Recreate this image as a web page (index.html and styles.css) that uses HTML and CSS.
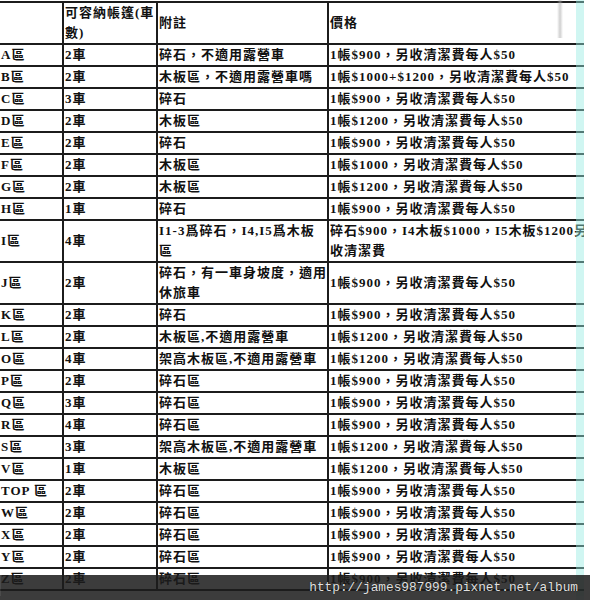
FILE: index.html
```html
<!DOCTYPE html>
<html lang="zh-Hant">
<head>
<meta charset="utf-8">
<title>營區表</title>
<link rel="stylesheet" href="styles.css">
</head>
<body>
<div class="frame">
  <div class="sheet">
    <table class="camp">
      <colgroup>
        <col class="c-zone"><col class="c-cap"><col class="c-note"><col class="c-price">
      </colgroup>
      <tr class="head">
        <td></td>
        <td class="top">可容納帳篷(車<br>數)</td>
        <td>附註</td>
        <td>價格</td>
      </tr>
      <tr><td>A區</td><td>2車</td><td>碎石，不適用露營車</td><td>1帳$900，另收清潔費每人$50</td></tr>
      <tr><td>B區</td><td>2車</td><td>木板區，不適用露營車嗎</td><td>1帳$1000+$1200，另收清潔費每人$50</td></tr>
      <tr><td>C區</td><td>3車</td><td>碎石</td><td>1帳$900，另收清潔費每人$50</td></tr>
      <tr><td>D區</td><td>2車</td><td>木板區</td><td>1帳$1200，另收清潔費每人$50</td></tr>
      <tr><td>E區</td><td>2車</td><td>碎石</td><td>1帳$900，另收清潔費每人$50</td></tr>
      <tr><td>F區</td><td>2車</td><td>木板區</td><td>1帳$1000，另收清潔費每人$50</td></tr>
      <tr><td>G區</td><td>2車</td><td>木板區</td><td>1帳$1200，另收清潔費每人$50</td></tr>
      <tr><td>H區</td><td>1車</td><td>碎石</td><td>1帳$900，另收清潔費每人$50</td></tr>
      <tr class="tall"><td>I區</td><td>4車</td><td>I1-3爲碎石，I4,I5爲木板<br>區</td><td>碎石$900，I4木板$1000，I5木板$1200另<br>收清潔費</td></tr>
      <tr class="tall"><td>J區</td><td>2車</td><td>碎石，有一車身坡度，適用<br>休旅車</td><td>1帳$900，另收清潔費每人$50</td></tr>
      <tr><td>K區</td><td>2車</td><td>碎石</td><td>1帳$900，另收清潔費每人$50</td></tr>
      <tr><td>L區</td><td>2車</td><td>木板區,不適用露營車</td><td>1帳$1200，另收清潔費每人$50</td></tr>
      <tr><td>O區</td><td>4車</td><td>架高木板區,不適用露營車</td><td>1帳$1200，另收清潔費每人$50</td></tr>
      <tr><td>P區</td><td>2車</td><td>碎石區</td><td>1帳$900，另收清潔費每人$50</td></tr>
      <tr><td>Q區</td><td>3車</td><td>碎石區</td><td>1帳$900，另收清潔費每人$50</td></tr>
      <tr><td>R區</td><td>4車</td><td>碎石區</td><td>1帳$900，另收清潔費每人$50</td></tr>
      <tr><td>S區</td><td>3車</td><td>架高木板區,不適用露營車</td><td>1帳$1200，另收清潔費每人$50</td></tr>
      <tr><td>V區</td><td>1車</td><td>木板區</td><td>1帳$1200，另收清潔費每人$50</td></tr>
      <tr><td>TOP 區</td><td>2車</td><td>碎石區</td><td>1帳$900，另收清潔費每人$50</td></tr>
      <tr><td>W區</td><td>2車</td><td>碎石區</td><td>1帳$900，另收清潔費每人$50</td></tr>
      <tr><td>X區</td><td>2車</td><td>碎石區</td><td>1帳$900，另收清潔費每人$50</td></tr>
      <tr><td>Y區</td><td>2車</td><td>碎石區</td><td>1帳$900，另收清潔費每人$50</td></tr>
      <tr><td>Z區</td><td>2車</td><td>碎石區</td><td>1帳$900，另收清潔費每人$50</td></tr>
    </table>
  </div>
  <div class="scroll-ghost"></div>
  <div class="tint"></div>
  <div class="watermark"><span>http://james987999.pixnet.net/album</span></div>
</div>
</body>
</html>
```
FILE: styles.css
```css
html, body {
  margin: 0;
  padding: 0;
  background: #ffffff;
}

.frame {
  position: relative;
  width: 590px;
  height: 600px;
  overflow: hidden;
  background: #ffffff;
}

.sheet {
  width: 584px;
  overflow: hidden;
  padding-top: 1px;
}

.camp {
  border-collapse: collapse;
  table-layout: fixed;
  width: 610px;
  font-family: "Liberation Serif", "Noto Sans CJK TC", serif;
  font-weight: bold;
  font-size: 13px;
  letter-spacing: 1px;
  color: #111;
}

.c-zone { width: 63px; }
.c-cap { width: 94px; }
.c-note { width: 171px; }
.c-price { width: 282px; }

.camp td {
  border: 2px solid #1c1c1c;
  padding: 0 0 0 1px;
  height: 18px;
  line-height: 20px;
  vertical-align: middle;
  white-space: nowrap;
  overflow: hidden;
}

.camp tr td:first-child {
  border-left: 0;
}

.camp tr.head td {
  height: 40px;
}

.camp tr.tall td {
  height: 40px;
}

.scroll-ghost {
  position: absolute;
  left: 557px;
  top: 0;
  width: 6px;
  height: 38px;
  background: linear-gradient(to right, rgba(200,200,200,0), rgba(170,170,170,0.7), rgba(200,200,200,0));
  opacity: 0.8;
}

.tint {
  position: absolute;
  left: 576px;
  top: 0;
  width: 8px;
  height: 600px;
  background: rgba(150, 236, 226, 0.45);
}

.watermark {
  position: absolute;
  left: 0;
  bottom: 0;
  width: 590px;
  height: 25px;
  background: rgba(28, 28, 28, 0.86);
  box-shadow: inset 0 -4px 0 rgba(28,28,28,0.3), inset 2px -5px 0 -1px rgba(255,255,255,0.08);
  display: flex;
  align-items: center;
  justify-content: flex-end;
  padding-right: 12px;
  box-sizing: border-box;
}

.watermark span {
  font-family: "Liberation Mono", "DejaVu Sans Mono", monospace;
  font-size: 12.8px;
  color: #e2e2e2;
  letter-spacing: 0;
  text-shadow: 0 0 1px #000;
}
```
